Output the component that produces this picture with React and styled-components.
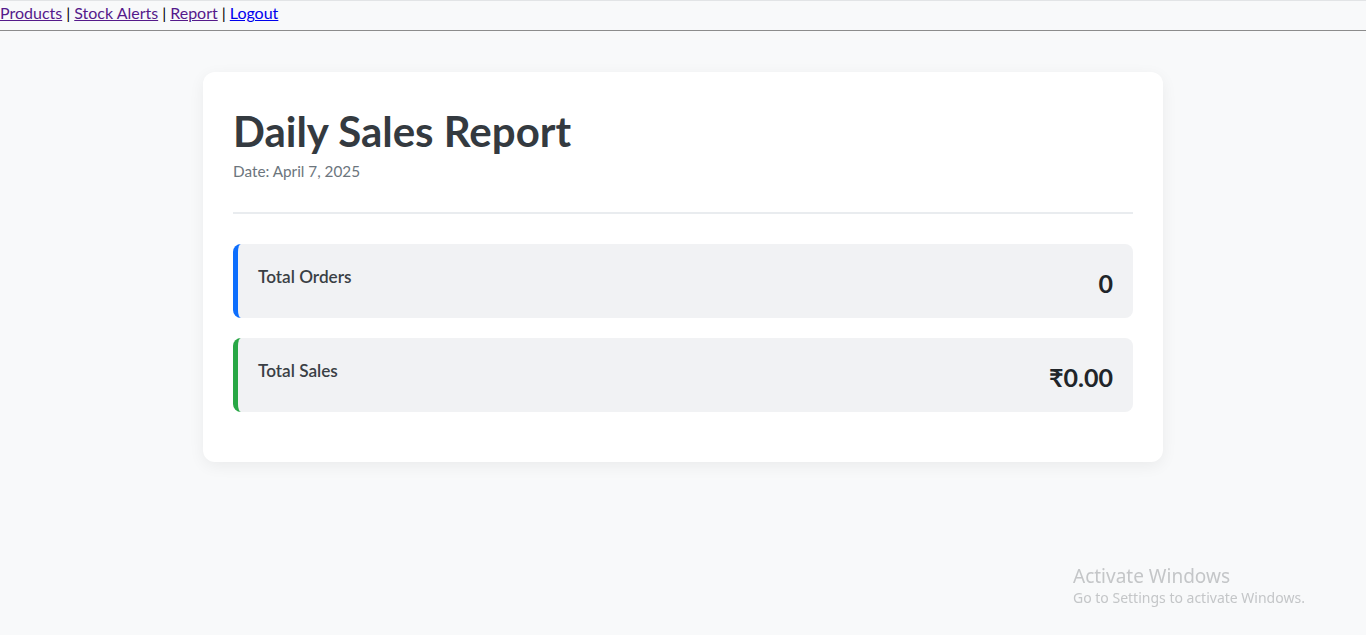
import React from "react";
import styled, { createGlobalStyle } from "styled-components";

const GlobalStyle = createGlobalStyle`
  html, body {
    margin: 0;
    padding: 0;
    background: #f8f9fa;
    font-family: Lato, "Noto Sans", sans-serif;
  }
`;

const Page = styled.div`
  min-height: 635px;
  border-top: 1px solid #e2e4e6;
  box-sizing: border-box;
`;

const Nav = styled.nav`
  height: 30px;
  display: flex;
  align-items: center;
  font-size: 16px;
  color: #000;
  border-bottom: 1px solid #8c8c8c;
  padding-bottom: 6px;
  box-sizing: border-box;
`;

const NavLink = styled.a`
  color: ${({ $visited }) => ($visited ? "#551a8b" : "#0000ee")};
  text-decoration: underline;
`;

const Sep = styled.span`
  margin: 0 4px;
`;

const Card = styled.main`
  width: 960px;
  margin: 41px auto 0;
  background: #fff;
  border-radius: 12px;
  box-shadow: 0 4px 16px rgba(0, 0, 0, 0.06);
  padding: 30px 30px 50px;
  box-sizing: border-box;
`;

const Title = styled.h1`
  margin: 0;
  font-size: 42px;
  line-height: 58px;
  font-weight: 700;
  color: #343a40;
`;

const DateLine = styled.p`
  margin: 0;
  font-size: 15.3px;
  line-height: 22px;
  color: #6c757d;
`;

const Divider = styled.hr`
  margin: 30px 0 30px;
  border: none;
  border-top: 2px solid #e9ecef;
`;

const StatList = styled.div`
  display: flex;
  flex-direction: column;
  gap: 20px;
`;

const Stat = styled.div`
  height: 74px;
  box-sizing: border-box;
  display: flex;
  justify-content: space-between;
  align-items: center;
  background: #f1f2f4;
  border-left: 5px solid ${({ $accent }) => $accent};
  border-radius: 8px;
  padding: 0 20px;
`;

const StatLabel = styled.span`
  font-size: 17.2px;
  font-weight: 600;
  color: #3a3f45;
  margin-bottom: 10px;
`;

const StatValue = styled.span`
  font-size: 25px;
  font-weight: 700;
  color: #212529;
  margin-top: 4px;
`;

const Watermark = styled.div`
  position: fixed;
  left: 1073px;
  top: 565px;
  color: #c4c6c8;
  font-family: "Noto Sans", sans-serif;
  line-height: 1.2;
`;

const WmTitle = styled.div`
  font-size: 19px;
`;

const WmSub = styled.div`
  font-size: 14px;
  margin-top: 2px;
`;

export default function App() {
  return (
    <Page>
      <GlobalStyle />
      <Nav>
        <NavLink href="#" $visited>Products</NavLink>
        <Sep>|</Sep>
        <NavLink href="#" $visited>Stock Alerts</NavLink>
        <Sep>|</Sep>
        <NavLink href="#" $visited>Report</NavLink>
        <Sep>|</Sep>
        <NavLink href="#">Logout</NavLink>
      </Nav>
      <Card>
        <Title>Daily Sales Report</Title>
        <DateLine>Date: April 7, 2025</DateLine>
        <Divider />
        <StatList>
          <Stat $accent="#0d6efd">
            <StatLabel>Total Orders</StatLabel>
            <StatValue>0</StatValue>
          </Stat>
          <Stat $accent="#28a745">
            <StatLabel>Total Sales</StatLabel>
            <StatValue>₹0.00</StatValue>
          </Stat>
        </StatList>
      </Card>
      <Watermark>
        <WmTitle>Activate Windows</WmTitle>
        <WmSub>Go to Settings to activate Windows.</WmSub>
      </Watermark>
    </Page>
  );
}
